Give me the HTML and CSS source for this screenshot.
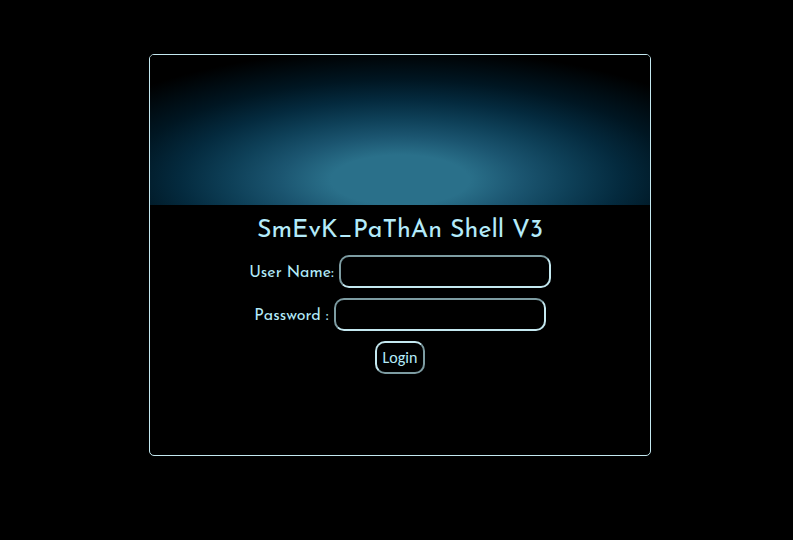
FILE: index.html
```html
<!DOCTYPE html>
<html lang="en">
<head>
<meta charset="utf-8">
<title>SmEvK_PaThAn Shell V3</title>
<link rel="stylesheet" href="styles.css">
</head>
<body>
<main class="card">
  <div class="banner"></div>
  <h1 class="title">SmEvK_PaThAn Shell V3</h1>
  <form class="login">
    <div class="row">
      <label for="user">User Name:</label>
      <input class="field" id="user" type="text">
    </div>
    <div class="row">
      <label for="pass">Password :</label>
      <input class="field" id="pass" type="password">
    </div>
    <button class="submit" type="submit">Login</button>
  </form>
</main>
</body>
</html>
```
FILE: styles.css
```css
* { box-sizing: border-box; }

body {
  margin: 0;
  padding: 54px 0 54px 7px;
  background: #000;
  color: #b4ebfa;
  font-family: "Josefin Sans", Lato, sans-serif;
}

.card {
  max-width: 502px;
  min-height: 402px;
  margin: 0 auto;
  border: 1px solid #c4e8f0;
  border-radius: 5px;
  overflow: hidden;
}

.banner {
  height: 150px;
  background: radial-gradient(345px 125px at 50% 125px,
    #2a708a 0%, #2a708a 20%, #1b5570 35%, #0e4058 49%,
    #042a3e 64%, #001622 80%, #000 105%);
}

.title {
  margin: 10px 0 8px;
  font-size: 25px;
  line-height: 32px;
  font-weight: 400;
  text-align: center;
}

.login {
  display: flex;
  flex-direction: column;
  align-items: center;
  gap: 10px;
}

.row {
  display: flex;
  align-items: center;
  gap: 5px;
  font-size: 16px;
  line-height: 18px;
}

.row label {
  padding-top: 2px;
}

.field,
.submit {
  height: 33px;
  border-radius: 10px;
  background: #000;
  color: inherit;
}

.field {
  width: 212px;
  padding: 0 8px;
  border: 2px solid #c4e8f0;
  border-top-color: #7d9ca2;
  border-left-color: #7d9ca2;
  font: inherit;
}

.submit {
  min-width: 50px;
  padding: 0 5px;
  border: 2px solid #c4e8f0;
  border-right-color: #7d9ca2;
  border-bottom-color: #7d9ca2;
  font: 16px Carlito, "Noto Sans", sans-serif;
}
```
